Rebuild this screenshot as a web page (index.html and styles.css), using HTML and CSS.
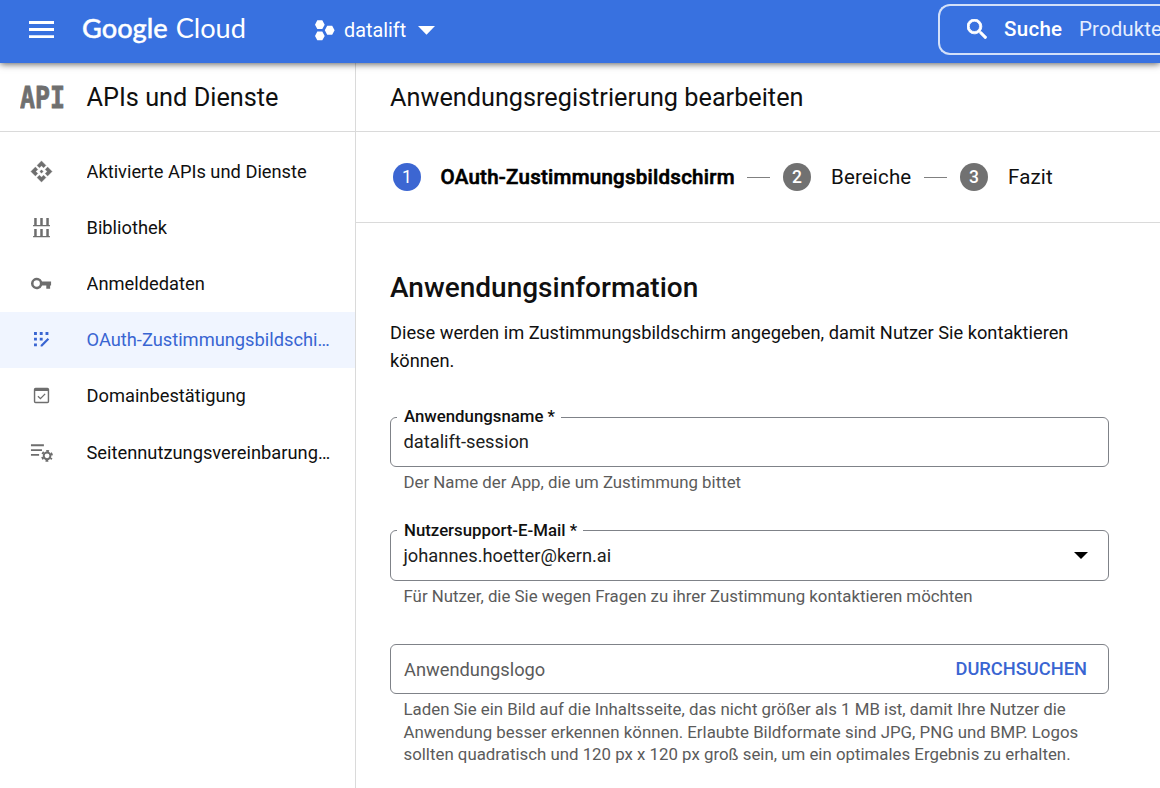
FILE: index.html
```html
<!DOCTYPE html>
<html lang="de">
<head>
<meta charset="utf-8">
<title>Google Cloud – APIs und Dienste</title>
<link rel="stylesheet" href="styles.css">
</head>
<body>
<header class="topbar">
  <svg class="menu-icon" width="25" height="18" viewBox="0 0 25 18" fill="#fff"><path d="M0 0h25v2.900H0zM0 7.100h25v2.900H0zM0 14.200h25v2.900H0z"/></svg>
  <div class="brand"><span class="brand-google">Google</span><span class="brand-cloud">Cloud</span></div>
  <div class="project">
    <svg width="20" height="21" viewBox="0 0 20 21" fill="#fff"><path d="M2.300.3h5l2.400 4.400-2.400 4.400h-5L0 4.700zM2.300 11.400h5l2.400 4.500-2.400 4.400h-5L0 15.900zM12.200 5.800h5l2.400 4.400-2.400 4.500h-5l-2.400-4.500z"/></svg>
    <span class="project-name">datalift</span>
    <svg width="17" height="9" viewBox="0 0 17 9" fill="#fff"><path d="M0 0h17L8.500 8.800z"/></svg>
  </div>
  <div class="search">
    <svg width="20" height="20" viewBox="3 3 17.500 17.500" fill="#fff" stroke="#fff" stroke-width=".7"><path d="M15.500 14h-.79l-.28-.27A6.470 6.470 0 0 0 16 9.500 6.500 6.500 0 1 0 9.500 16c1.610 0 3.090-.59 4.230-1.570l.27.28v.79l5 4.990L20.490 19l-4.990-5zm-6 0C7.010 14 5 11.990 5 9.500S7.010 5 9.500 5 14 7.010 14 9.500 11.990 14 9.500 14z"/></svg>
    <b class="search-label">Suche</b>
    <span class="search-hint">Produkte</span>
  </div>
</header>
<div class="layout">
  <aside class="sidebar">
    <div class="product">
      <svg class="api-logo" width="46" height="34" viewBox="0 0 46 34"><text x="0" y="27.500" textLength="45" lengthAdjust="spacingAndGlyphs">API</text></svg>
      <span>APIs und Dienste</span>
    </div>
    <nav class="nav">
      <a class="nav-item">
        <svg viewBox="0 0 24 24"><path stroke="currentColor" stroke-width=".4" stroke-linejoin="round" d="M12 10.300l1.700 1.700-1.700 1.700-1.700-1.700zM12 6l2.120 2.120 2.500-2.500L12 1 7.380 5.620l2.500 2.500zM6 12l2.120-2.120-2.500-2.500L1 12l4.620 4.620 2.500-2.500zM18 12l-2.120 2.120 2.500 2.500L23 12l-4.620-4.620-2.500 2.500zM12 18l-2.120-2.120-2.500 2.500L12 23l4.620-4.620-2.500-2.500z"/></svg>
        <span>Aktivierte APIs und Dienste</span>
      </a>
      <a class="nav-item">
        <svg viewBox="0 0 24 24"><path d="M3.200 9.400h17.600v1.400H3.200zM4.400 2H7v7.400H4.400zM10.700 2h2.600v7.400h-2.600zM17 2h2.600v7.400H17zM3.200 20.800h17.600v1.400H3.200zM4.400 13.600H7v7.200H4.400zM10.700 13.600h2.600v7.200h-2.600zM17 13.600h2.600v7.200H17z"/></svg>
        <span>Bibliothek</span>
      </a>
      <a class="nav-item">
        <svg viewBox="0 0 24 24"><path fill-rule="evenodd" d="M12.650 10A6 6 0 1 0 12.650 14H17v3.500h4V14h1v-4zM7 15.300a3.300 3.300 0 1 1 0-6.600 3.300 3.300 0 0 1 0 6.600z"/></svg>
        <span>Anmeldedaten</span>
      </a>
      <a class="nav-item nav-item-active">
        <svg viewBox="0 0 24 24"><path d="M4.200 4.200h3v3h-3zM10.200 4.200h3v3h-3zM16.200 4.200h3v3h-3zM4.200 10.100h3v3h-3zM10.200 10.100h3v3h-3zM4.200 16.100h3v3h-3zM18.400 10.500l1.600 1.600-7.200 7.200h-1.700v-1.600z"/></svg>
        <span>OAuth-Zustimmungsbildschirm</span>
      </a>
      <a class="nav-item">
        <svg viewBox="0 0 24 24"><path fill-rule="evenodd" d="M5.800 4h12.400A1.800 1.800 0 0 1 20 5.800v12.400a1.800 1.800 0 0 1-1.800 1.800H5.800A1.800 1.800 0 0 1 4 18.200V5.800A1.800 1.800 0 0 1 5.800 4zM5.500 7.300v11.200h13V7.300z"/><path class="tick" d="M8.300 12.700l2.600 2.600 4.900-5"/></svg>
        <span>Domainbestätigung</span>
      </a>
      <a class="nav-item">
        <svg viewBox="0 0 24 24"><path d="M1 3.500h13.500v2H1zM1 8.500h11.500v2H1zM1 13.500h8.500v2H1z"/><circle class="gear-ring" cx="17.800" cy="15.500" r="3.500"/><circle class="gear-teeth" cx="17.800" cy="15.500" r="5.200"/></svg>
        <span>Seitennutzungsvereinbarungen</span>
      </a>
    </nav>
  </aside>
  <main class="content">
    <h1 class="page-title">Anwendungsregistrierung bearbeiten</h1>
    <ol class="stepper">
      <li class="step step-current"><span class="step-number">1</span><span class="step-name">OAuth-Zustimmungsbildschirm</span></li>
      <li class="step-line"></li>
      <li class="step step-two"><span class="step-number">2</span><span class="step-name">Bereiche</span></li>
      <li class="step-line"></li>
      <li class="step"><span class="step-number">3</span><span class="step-name">Fazit</span></li>
    </ol>
    <section class="form">
      <h2 class="form-title">Anwendungsinformation</h2>
      <p class="form-intro">Diese werden im Zustimmungsbildschirm angegeben, damit Nutzer Sie kontaktieren können.</p>
      <div class="field field-name">
        <fieldset class="box"><legend>Anwendungsname *</legend><span class="value">datalift-session</span></fieldset>
        <p class="help">Der Name der App, die um Zustimmung bittet</p>
      </div>
      <div class="field">
        <fieldset class="box"><legend>Nutzersupport-E-Mail *</legend><span class="value">johannes.hoetter@kern.ai<svg class="caret" width="14" height="7" viewBox="0 0 14 7"><path d="M0 0h14L7 7z"/></svg></span></fieldset>
        <p class="help">Für Nutzer, die Sie wegen Fragen zu ihrer Zustimmung kontaktieren möchten</p>
      </div>
      <div class="field">
        <div class="box"><span class="placeholder">Anwendungslogo</span><span class="browse">DURCHSUCHEN</span></div>
        <p class="help">Laden Sie ein Bild auf die Inhaltsseite, das nicht größer als 1 MB ist, damit Ihre Nutzer die<br>Anwendung besser erkennen können. Erlaubte Bildformate sind JPG, PNG und BMP. Logos<br>sollten quadratisch und 120 px x 120 px groß sein, um ein optimales Ergebnis zu erhalten.</p>
      </div>
    </section>
  </main>
</div>
</body>
</html>
```
FILE: styles.css
```css
* { box-sizing: border-box; }
body { margin: 0; height: 788px; overflow: hidden; display: flex; flex-direction: column; background: #fff; color: #101010; font-family: Roboto, "Liberation Sans", sans-serif; font-size: 18.3px; }
h1, h2, p, ol, fieldset { margin: 0; padding: 0; font-weight: 400; }
svg { flex: none; display: block; }

.topbar { position: relative; z-index: 1; flex: none; height: 63px; display: flex; align-items: center; padding-left: 29px; background: #3871e0; color: #fff; white-space: nowrap; box-shadow: 0 1px 7px rgba(0, 0, 0, .65); }
.menu-icon { margin-top: -4px; }
.brand { display: flex; gap: 8px; width: 164px; margin: -8px 0 0 28px; font-family: Lato, sans-serif; font-size: 27.2px; line-height: 34px; }
.brand-google { font-weight: 500; -webkit-text-stroke: .4px #fff; }
.brand-cloud { font-weight: 400; }
.project { display: flex; align-items: center; gap: 9px; margin: -3px 0 0 69px; }
.project-name { width: 65px; font-size: 19.8px; }
.search { flex: 1; min-width: 0; overflow: hidden; height: 51px; margin: -4px 0 0 503px; display: flex; align-items: center; padding: 0 0 2px 27px; border: 2px solid #d3e0f9; border-right: 0; border-radius: 12px 0 0 12px; font-size: 20.5px; }
.search-label { flex: none; margin-left: 17px; width: 58px; font-weight: 500; letter-spacing: .3px; }
.search-hint { flex: none; margin-left: 17px; color: #e6eeff; letter-spacing: .1px; }

.layout { flex: 1; display: flex; }
.sidebar { flex: none; width: 356px; border-right: 1px solid #dadada; }
.product { height: 69px; display: flex; align-items: center; gap: 20.5px; padding-left: 20px; border-bottom: 1px solid #dadada; font-size: 25.3px; }
.api-logo text { font: 700 30px "DejaVu Sans Mono", monospace; fill: #6f6f6f; stroke: #6f6f6f; stroke-width: .8px; }
.nav { padding-top: 11px; }
.nav-item { height: 56.2px; display: flex; align-items: center; gap: 33.5px; padding: 0 22px 0 30px; }
.nav-item svg { width: 23px; height: 23px; fill: currentColor; color: #6e6e6e; }
.nav-item span { min-width: 0; overflow: hidden; text-overflow: ellipsis; white-space: nowrap; }
.nav-item-active { background: #f0f5ff; color: #3965d2; }
.nav-item-active svg { color: #3965d2; }
.tick { fill: none; stroke: currentColor; stroke-width: 1.4px; }
.gear-ring { fill: none; stroke: currentColor; stroke-width: 2px; }
.gear-teeth { fill: none; stroke: currentColor; stroke-width: 2px; stroke-dasharray: 2.7 2.745; stroke-dashoffset: 1.35px; transform: rotate(30deg); transform-origin: 17.8px 15.5px; }

.content { flex: 1; }
.page-title { height: 69px; padding: 0 0 0 34px; border-bottom: 1px solid #dadada; font-size: 25.25px; line-height: 69px; }
.stepper { height: 91px; display: flex; align-items: center; padding-left: 37px; border-bottom: 1px solid #dadada; list-style: none; font-size: 20.5px; white-space: nowrap; }
.step { display: flex; align-items: center; gap: 20px; letter-spacing: .15px; }
.step-number { width: 28px; height: 28px; border-radius: 50%; background: #717171; color: #fff; font-size: 17.5px; font-weight: 500; line-height: 28px; text-align: center; letter-spacing: 0; }
.step-current { gap: 19.5px; }
.step-current .step-number { background: #3c66d2; font-weight: 400; }
.step-current .step-name { width: 294.5px; color: #000; font-weight: 500; letter-spacing: .26px; -webkit-text-stroke: .6px #000; }
.step-two .step-name { width: 81px; }
.step-line { width: 23px; height: 1px; margin: 0 13px 0 12px; background: #808080; }

.form { width: 753px; padding: 46px 0 0 34px; }
.form-title { font-size: 28px; font-weight: 500; line-height: 38px; }
.form-intro { margin-top: 12px; font-size: 18.25px; line-height: 28px; }
.field { height: 113.5px; display: flex; flex-direction: column; }
.field-name { margin-top: 42px; }
.box { flex: none; height: 50px; border: 1px solid #7f8288; border-radius: 6px; display: flex; align-items: center; padding: 0 21px 0 13px; }
fieldset.box { display: block; height: 61px; margin-top: -11px; padding: 0 6px; }
legend { height: 22px; padding: 0 6px 0 7px; font-size: 16.8px; font-weight: 500; line-height: 21px; white-space: nowrap; }
.value { display: flex; align-items: center; justify-content: space-between; padding: 0 14px 0 6.5px; line-height: 28px; color: #202020; }
.caret { fill: #000; }
.placeholder { color: #5b5b5b; }
.browse { margin-left: auto; color: #3965d2; font-weight: 500; margin-top: -2px; }
.help { padding: 4px 0 0 13.5px; color: #5b5b5b; font-size: 16.83px; line-height: 22.5px; white-space: nowrap; }
```
